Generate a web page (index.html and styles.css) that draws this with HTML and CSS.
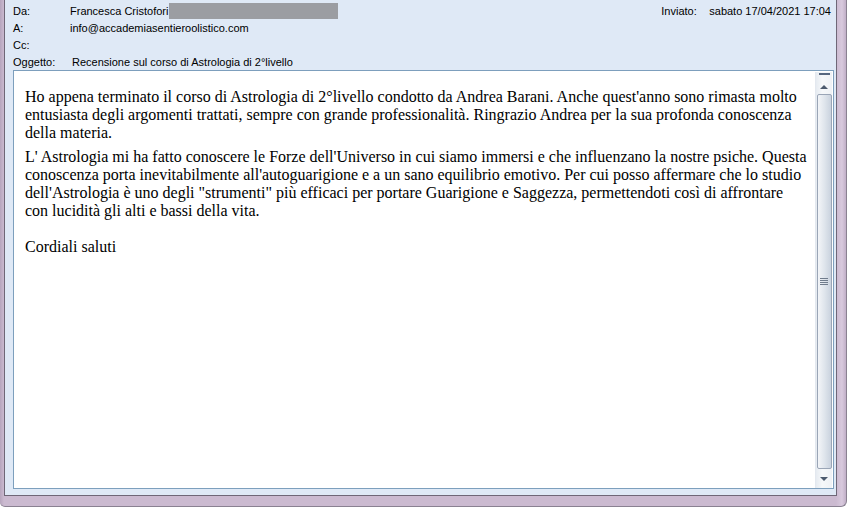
FILE: index.html
```html
<!DOCTYPE html>
<html lang="it">
<head>
  <meta charset="UTF-8" />
  <title>Recensione sul corso di Astrologia di 2°livello</title>
  <link rel="stylesheet" href="styles.css">
</head>
<body>

  <div class="window">
    <div class="pane">

      <div class="header">
        <div class="row">
          <span class="label">Da:</span>
          <span class="value">Francesca Cristofori</span>
          <span class="redacted"></span>
          <span class="sent">
            <span class="sent-label">Inviato:</span>
            <span>sabato 17/04/2021 17:04</span>
          </span>
        </div>
        <div class="row">
          <span class="label">A:</span>
          <span class="value">info@accademiasentieroolistico.com</span>
        </div>
        <div class="row">
          <span class="label">Cc:</span>
        </div>
        <div class="row">
          <span class="label">Oggetto:</span>
          <span class="value subject">Recensione sul corso di Astrologia di 2°livello</span>
        </div>
      </div>

      <div class="message">
        <div class="text">
          <p>Ho appena terminato il corso di Astrologia di 2°livello condotto da Andrea Barani. Anche quest'anno sono rimasta molto<br>
          entusiasta degli argomenti trattati, sempre con grande professionalità. Ringrazio Andrea per la sua profonda conoscenza<br>
          della materia.</p>
          <p class="next">L' Astrologia mi ha fatto conoscere le Forze dell'Universo in cui siamo immersi e che influenzano la nostre psiche. Questa<br>
          conoscenza porta inevitabilmente all'autoguarigione e a un sano equilibrio emotivo. Per cui posso affermare che lo studio<br>
          dell'Astrologia è uno degli "strumenti" più efficaci per portare Guarigione e Saggezza, permettendoti così di affrontare<br>
          con lucidità gli alti e bassi della vita.</p>
          <p class="closing">Cordiali saluti</p>
        </div>

        <div class="scrollbar">
          <div class="split"></div>
          <div class="arrow up"></div>
          <div class="thumb">
            <div class="grip"></div>
          </div>
          <div class="arrow down"></div>
        </div>
      </div>

    </div>
  </div>

</body>
</html>
```

FILE: styles.css
```css
:root {
  --frame-dark: #6f6777;
  --pane: #dfe9f6;
  --box-border: #7d9fbd;
}
* {
  margin: 0;
  padding: 0;
  box-sizing: border-box;
}
html, body {
  width: 849px;
  height: 509px;
  overflow: hidden;
  background: #fff;
}
.window {
  width: 847px;
  height: 507px;
  background: linear-gradient(to right, #b6a5bd 0, #cbbad0 4px, #cbbad0 836px, #d8c9dd 842px, #c1afc7 100%);
  border-right: 1px solid #8a8191;
  border-bottom: 1px solid #8a8191;
  border-bottom-left-radius: 5px;
  border-bottom-right-radius: 6px;
  padding: 0 9px 10px 4px;
}
.pane {
  height: 100%;
  background: var(--pane);
  border-left: 1px solid var(--frame-dark);
  border-right: 1px solid var(--frame-dark);
  border-bottom: 1px solid var(--frame-dark);
  display: flex;
  flex-direction: column;
  padding: 2px 2px 6px 8px;
}
.header {
  font-family: "Liberation Sans", Arial, sans-serif;
  font-size: 11px;
  color: #000;
}
.row {
  display: flex;
  align-items: center;
  height: 17px;
  white-space: nowrap;
}
.label {
  width: 57px;
  flex: none;
}
.subject {
  padding-left: 2px;
}
.redacted {
  width: 169px;
  height: 16px;
  margin-left: 1px;
  background: #9b9da2;
}
.sent {
  margin-left: auto;
  padding-right: 3px;
  display: flex;
}
.sent-label {
  width: 48px;
}
.message {
  flex: 1;
  display: flex;
  background: #fff;
  border: 1px solid var(--box-border);
}
.text {
  flex: 1;
  padding: 17px 0 0 11px;
  font-family: "Liberation Serif", "Times New Roman", serif;
  font-size: 16px;
  line-height: 18px;
  color: #000;
  white-space: nowrap;
  overflow: hidden;
}
.next {
  margin-top: 6px;
}
.closing {
  margin-top: 18px;
}
.scrollbar {
  width: 17px;
  margin: 1px 1px 0 0;
  background: linear-gradient(to right, #e6ebf1, #f6f8fa 40%, #eef1f5);
  border-left: 1px solid #e3e8ef;
  display: flex;
  flex-direction: column;
  align-items: center;
}
.split {
  width: 11px;
  height: 2px;
  margin-top: 1px;
  background: #56677f;
}
.arrow {
  width: 0;
  height: 0;
  border-left: 4px solid transparent;
  border-right: 4px solid transparent;
}
.arrow.up {
  margin-top: 10px;
  border-bottom: 4px solid #4c5a6e;
}
.arrow.down {
  margin: 8px 0 7px;
  border-top: 4px solid #4c5a6e;
}
.thumb {
  flex: 1;
  width: 15px;
  margin-top: 5px;
  border: 1px solid #9aa5b6;
  border-radius: 2px;
  background: linear-gradient(to right, #f3f5f8, #dfe5ec 50%, #c9d2de);
  display: flex;
  align-items: center;
  justify-content: center;
}
.grip {
  width: 8px;
  height: 7px;
  background: repeating-linear-gradient(to bottom, #707c8c 0, #707c8c 1px, transparent 1px, transparent 2px);
}
```
